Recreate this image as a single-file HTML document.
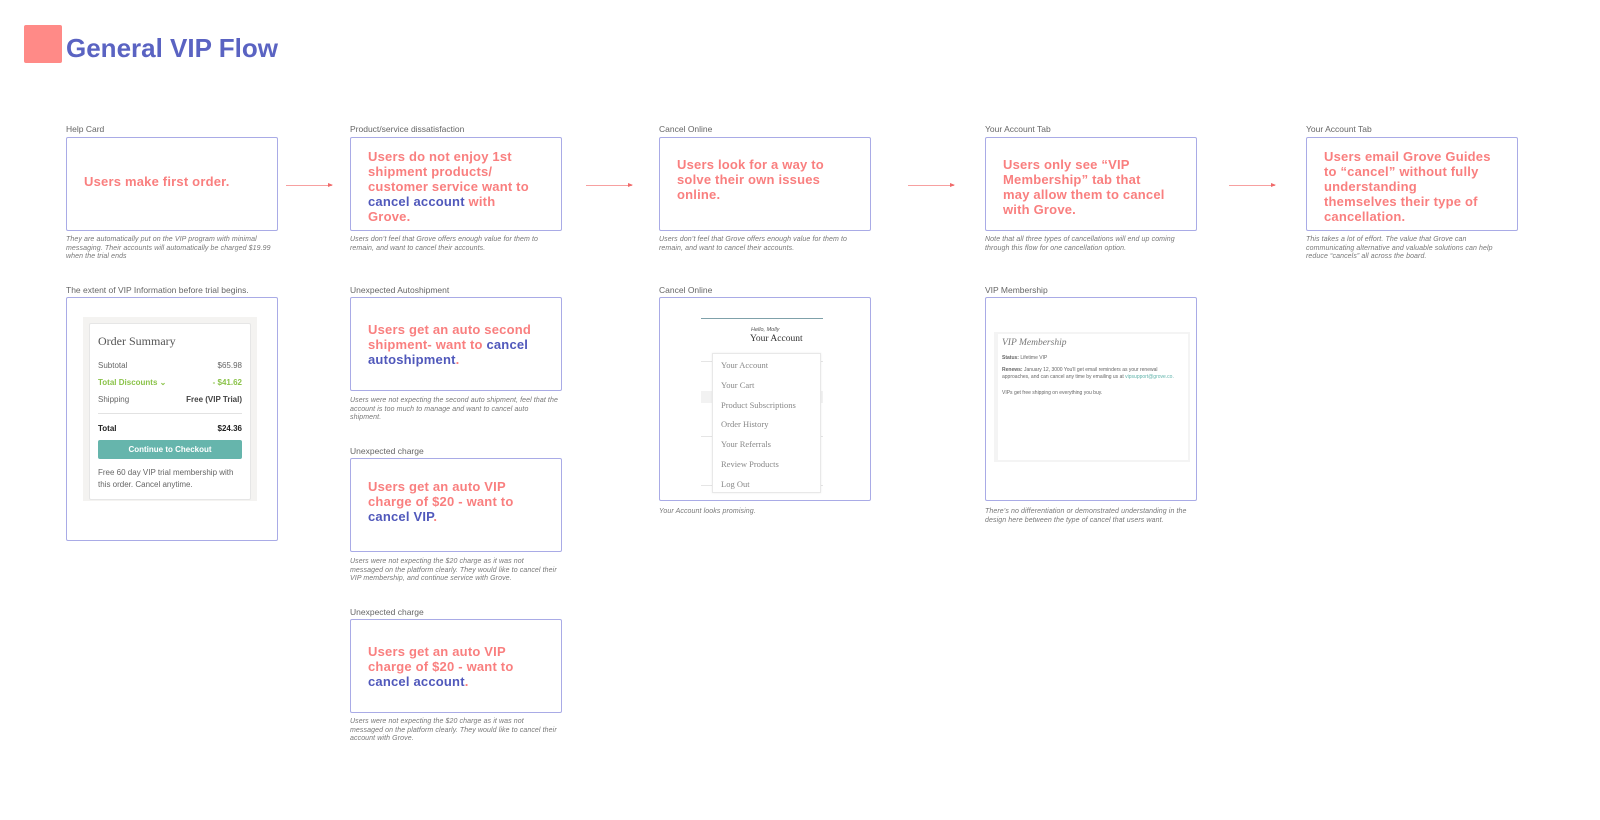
<!DOCTYPE html>
<html><head><meta charset="utf-8"><style>
*{margin:0;padding:0;box-sizing:border-box}
body{width:1600px;height:820px;background:#fff;position:relative;overflow:hidden;font-family:"Liberation Sans",sans-serif}
.a{position:absolute}
.lbl{position:absolute;font-size:8.5px;color:#666;white-space:nowrap}
.box{position:absolute;width:212px;border:1px solid #a9abe6;border-radius:2px;background:#fff}
.t{position:absolute;left:17px;font-weight:bold;font-size:13px;line-height:15px;color:#f97f7f;letter-spacing:.2px;white-space:nowrap}
.b{color:#5058bb}
.cap{position:absolute;font-size:7px;font-style:italic;color:#777;line-height:8.5px;width:208px;letter-spacing:.1px}
.arr{position:absolute;height:1px;width:46px;background:#f7a0a0}
.arr:after{content:"";position:absolute;right:-1px;top:-2px;border-left:5px solid #f06a6a;border-top:2.5px solid transparent;border-bottom:2.5px solid transparent}
.serif{font-family:"Liberation Serif",serif}
</style></head><body>
<div class="a" style="left:24px;top:25px;width:38px;height:38px;background:#ff8a87;border-radius:2px"></div>
<div class="a" style="left:66px;top:33px;font-size:26px;font-weight:bold;color:#5a63c2">General VIP Flow</div>

<!-- row1 -->
<div class="lbl" style="left:66px;top:124px">Help Card</div>
<div class="box" style="left:66px;top:137px;height:94px"><div class="t" style="top:36px">Users make first order.</div></div>
<div class="cap" style="left:66px;top:236px">They are automatically put on the VIP program with minimal messaging. Their accounts will automatically be charged $19.99 when the trial ends</div>

<div class="lbl" style="left:350px;top:124px">Product/service dissatisfaction</div>
<div class="box" style="left:350px;top:137px;height:94px"><div class="t" style="top:11px">Users do not enjoy 1st<br>shipment products/<br>customer service want to<br><span class="b">cancel account</span> with<br>Grove.</div></div>
<div class="cap" style="left:350px;top:236px">Users don’t feel that Grove offers enough value for them to remain, and want to cancel their accounts.</div>

<div class="lbl" style="left:659px;top:124px">Cancel Online</div>
<div class="box" style="left:659px;top:137px;height:94px"><div class="t" style="top:19px">Users look for a way to<br>solve their own issues<br>online.</div></div>
<div class="cap" style="left:659px;top:236px">Users don’t feel that Grove offers enough value for them to remain, and want to cancel their accounts.</div>

<div class="lbl" style="left:985px;top:124px">Your Account Tab</div>
<div class="box" style="left:985px;top:137px;height:94px"><div class="t" style="top:19px">Users only see “VIP<br>Membership” tab that<br>may allow them to cancel<br>with Grove.</div></div>
<div class="cap" style="left:985px;top:236px">Note that all three types of cancellations will end up coming through this flow for one cancellation option.</div>

<div class="lbl" style="left:1306px;top:124px">Your Account Tab</div>
<div class="box" style="left:1306px;top:137px;height:94px"><div class="t" style="top:11px">Users email Grove Guides<br>to “cancel” without fully<br>understanding<br>themselves their type of<br>cancellation.</div></div>
<div class="cap" style="left:1306px;top:236px">This takes a lot of effort. The value that Grove can communicating alternative and valuable solutions can help reduce “cancels” all across the board.</div>

<div class="arr" style="left:286px;top:185px"></div>
<div class="arr" style="left:586px;top:185px"></div>
<div class="arr" style="left:908px;top:185px"></div>
<div class="arr" style="left:1229px;top:185px"></div>

<!-- row2 col1 -->
<div class="lbl" style="left:66px;top:285px">The extent of VIP Information before trial begins.</div>
<div class="box" style="left:66px;top:297px;height:244px">
  <div class="a" style="left:16px;top:19px;width:174px;height:184px;background:#f4f3f1"></div>
  <div class="a" style="left:22px;top:25px;width:162px;height:177px;background:#fff;border:1px solid #e6e6e6;border-radius:2px;font-size:8px;color:#666">
    <div class="a serif" style="left:8px;top:10px;font-size:12px;color:#555">Order Summary</div>
    <div class="a" style="left:8px;top:37px">Subtotal</div><div class="a" style="right:8px;top:37px">$65.98</div>
    <div class="a" style="left:8px;top:54px;color:#8bc34a;font-weight:bold">Total Discounts ⌄</div><div class="a" style="right:8px;top:54px;color:#8bc34a;font-weight:bold">- $41.62</div>
    <div class="a" style="left:8px;top:71px">Shipping</div><div class="a" style="right:8px;top:71px;color:#444;font-weight:bold">Free (VIP Trial)</div>
    <div class="a" style="left:8px;right:8px;top:89px;height:1px;background:#e2e2e2"></div>
    <div class="a" style="left:8px;top:100px;color:#222;font-weight:bold">Total</div><div class="a" style="right:8px;top:100px;color:#222;font-weight:bold">$24.36</div>
    <div class="a" style="left:8px;right:8px;top:116px;height:19px;background:#66b5ac;border-radius:2px;color:#fff;font-weight:bold;text-align:center;line-height:19px">Continue to Checkout</div>
    <div class="a" style="left:8px;top:143px;width:150px;line-height:11.5px">Free 60 day VIP trial membership with this order. Cancel anytime.</div>
  </div>
</div>

<!-- row2 col2 -->
<div class="lbl" style="left:350px;top:285px">Unexpected Autoshipment</div>
<div class="box" style="left:350px;top:297px;height:94px"><div class="t" style="top:24px">Users get an auto second<br>shipment- want to <span class="b">cancel</span><br><span class="b">autoshipment</span>.</div></div>
<div class="cap" style="left:350px;top:397px">Users were not expecting the second auto shipment, feel that the account is too much to manage and want to cancel auto shipment.</div>

<div class="lbl" style="left:350px;top:446px">Unexpected charge</div>
<div class="box" style="left:350px;top:458px;height:94px"><div class="t" style="top:20px">Users get an auto VIP<br>charge of $20 - want to<br><span class="b">cancel VIP</span>.</div></div>
<div class="cap" style="left:350px;top:558px">Users were not expecting the $20 charge as it was not messaged on the platform clearly. They would like to cancel their VIP membership, and continue service with Grove.</div>

<div class="lbl" style="left:350px;top:607px">Unexpected charge</div>
<div class="box" style="left:350px;top:619px;height:94px"><div class="t" style="top:24px">Users get an auto VIP<br>charge of $20 - want to<br><span class="b">cancel account</span>.</div></div>
<div class="cap" style="left:350px;top:718px">Users were not expecting the $20 charge as it was not messaged on the platform clearly. They would like to cancel their account with Grove.</div>

<!-- row2 col3 -->
<div class="lbl" style="left:659px;top:285px">Cancel Online</div>
<div class="box" style="left:659px;top:297px;height:204px">
  <div class="a" style="left:41px;top:20px;width:122px;height:1px;background:#7fa1aa"></div>
  <div class="a" style="left:91px;top:29px;font-size:5.5px;font-style:italic;color:#555">Hello, Molly</div>
  <div class="a serif" style="left:90px;top:36px;font-size:9.5px;color:#333">Your Account</div>
  <div class="a" style="left:41px;top:63px;width:122px;height:1px;background:#e5e5e5"></div>
  <div class="a" style="left:41px;top:93px;width:122px;height:12px;background:#f2f2f2"></div>
  <div class="a" style="left:41px;top:138px;width:122px;height:1px;background:#e5e5e5"></div>
  <div class="a" style="left:41px;top:187px;width:122px;height:1px;background:#e5e5e5"></div>
  <div class="a serif" style="left:52px;top:55px;width:109px;height:140px;background:#fff;border:1px solid #e8e8e8;box-shadow:0 0 2px rgba(0,0,0,.08);font-size:8.5px;color:#888;line-height:19.8px;padding:2px 0 0 8px">Your Account<br>Your Cart<br>Product Subscriptions<br>Order History<br>Your Referrals<br>Review Products<br>Log Out</div>
</div>
<div class="cap" style="left:659px;top:508px">Your Account looks promising.</div>

<!-- row2 col4 -->
<div class="lbl" style="left:985px;top:285px">VIP Membership</div>
<div class="box" style="left:985px;top:297px;height:204px">
  <div class="a" style="left:8px;top:34px;width:196px;height:130px;background:#f4f4f4"></div>
  <div class="a" style="left:12px;top:36px;width:190px;height:126px;background:#fff;font-size:5px;color:#666;line-height:6.5px">
    <div class="a serif" style="left:4px;top:6px;font-size:9.5px;font-style:italic;color:#777">VIP Membership</div>
    <div class="a" style="left:4px;top:21px"><b>Status:</b> Lifetime VIP</div>
    <div class="a" style="left:4px;top:33px;width:180px"><b>Renews:</b> January 12, 3000 You'll get email reminders as your renewal approaches, and can cancel any time by emailing us at <span style="color:#5fb3aa">vipsupport@grove.co.</span></div>
    <div class="a" style="left:4px;top:56px">VIPs get free shipping on everything you buy.</div>
  </div>
</div>
<div class="cap" style="left:985px;top:508px">There’s no differentiation or demonstrated understanding in the design here between the type of cancel that users want.</div>
</body></html>
